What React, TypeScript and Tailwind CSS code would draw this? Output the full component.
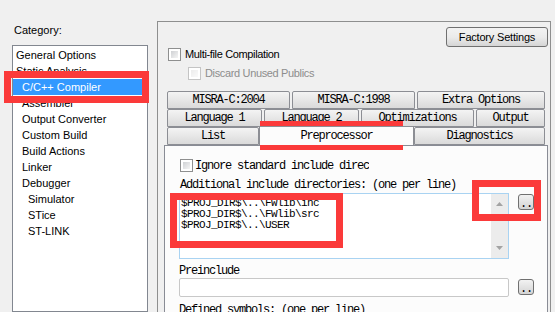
import React from 'react'

const sans = "font-['Liberation_Sans',Arial,sans-serif]"
const mono = "font-['Liberation_Mono',monospace] text-[12px] tracking-[-1.2px] text-black"
const monoSmall = "font-['Liberation_Mono',monospace] text-[11px] tracking-[-0.6px] text-black"
const redBox = 'absolute border-[7px] border-[#fb3a3a] pointer-events-none'

const categories = [
  { name: 'General Options', pad: 'pl-[3px]' },
  { name: 'Static Analysis', pad: 'pl-[3px]' },
  { name: 'C/C++ Compiler', pad: 'pl-[9px]', selected: true },
  { name: 'Assembler', pad: 'pl-[9px]' },
  { name: 'Output Converter', pad: 'pl-[9px]' },
  { name: 'Custom Build', pad: 'pl-[9px]' },
  { name: 'Build Actions', pad: 'pl-[9px]' },
  { name: 'Linker', pad: 'pl-[9px]' },
  { name: 'Debugger', pad: 'pl-[9px]' },
  { name: 'Simulator', pad: 'pl-[15px]' },
  { name: 'STice', pad: 'pl-[15px]' },
  { name: 'ST-LINK', pad: 'pl-[15px]' },
]

function Checkbox({ disabled }: { disabled?: boolean }) {
  return (
    <div
      className={
        disabled
          ? 'w-[13px] h-[13px] shrink-0 border border-[#c4c4c4] bg-white p-[2px]'
          : 'w-[13px] h-[13px] shrink-0 border border-[#8e8f8f] bg-white p-[2px]'
      }
    >
      <div
        className={
          disabled
            ? 'w-full h-full bg-linear-to-br from-[#ececec] to-[#fafafa]'
            : 'w-full h-full bg-linear-to-br from-[#cfd1d4] to-[#f5f5f5]'
        }
      />
    </div>
  )
}

function Tab({ label, className }: { label: string; className: string }) {
  return (
    <div
      className={
        'h-[18px] shrink-0 flex items-center justify-center border border-[#8c8e94] rounded-t-[2px] bg-linear-to-b from-[#f4f4f4] to-[#dadada] ' +
        mono +
        ' ' +
        className
      }
    >
      {label}
    </div>
  )
}

function DotsButton() {
  return (
    <div className="ml-[9px] mt-[1px] w-[16px] h-[16px] shrink-0 rounded-[3px] border border-[#707070] bg-linear-to-b from-[#f2f2f2] to-[#d4d4d4] flex items-end justify-center">
      <span className={mono + ' leading-[10px]'}>..</span>
    </div>
  )
}

function Arrow({ up }: { up?: boolean }) {
  return (
    <svg width="7" height="4" viewBox="0 0 7 4">
      <polygon points={up ? '0,4 7,4 3.5,0' : '0,0 7,0 3.5,4'} fill="#a3a3a3" />
    </svg>
  )
}

export default function App() {
  return (
    <div className={'relative w-[555px] h-[312px] overflow-hidden bg-[#f0f0f0] flex text-[11px] text-black ' + sans}>
      {/* category list */}
      <div className="w-[157px] shrink-0 pl-[12px] pt-[24px] flex flex-col">
        <div className="h-[13px] leading-[13px] pl-[2px]">Category:</div>
        <div className="mt-[8px] w-[136px] h-[280px] border border-[#828790] bg-white pt-[1px]">
          {categories.map((c) =>
            c.selected ? (
              <div key={c.name} className={'h-[16px] leading-[16px] mr-[3px] bg-[#3399ff] text-white ' + c.pad}>
                {c.name}
              </div>
            ) : (
              <div key={c.name} className={'h-[16px] leading-[16px] ' + c.pad}>
                {c.name}
              </div>
            )
          )}
        </div>
      </div>

      {/* options frame */}
      <div className="mt-[21px] w-[394px] h-[300px] shrink-0 border-l border-t border-r border-[#8e8f8f] flex flex-col">
        <div className="flex justify-end pt-[5px] pr-[2px]">
          <div className="w-[102px] h-[20px] rounded-[3px] border border-[#707070] bg-linear-to-b from-[#f3f3f3] via-[#ebebeb] to-[#d5d5d5] flex items-center justify-center tracking-[-0.2px]">
            Factory Settings
          </div>
        </div>

        <div className="mt-[1px] pl-[10px] flex items-center gap-[4px] h-[13px] tracking-[-0.35px]">
          <Checkbox />
          <span>Multi-file Compilation</span>
        </div>
        <div className="mt-[6px] pl-[30px] flex items-center gap-[4px] h-[13px] tracking-[-0.35px] text-[#8d8d8d]">
          <Checkbox disabled />
          <span>Discard Unused Publics</span>
        </div>

        {/* tabs */}
        <div className="mt-[11px] pl-[9px] flex flex-col">
          <div className="flex gap-[2px]">
            <Tab label="MISRA-C:2004" className="w-[123px]" />
            <Tab label="MISRA-C:1998" className="w-[123px]" />
            <Tab label="Extra Options" className="w-[128px]" />
          </div>
          <div className="flex gap-[2px]">
            <Tab label="Language 1" className="w-[95px]" />
            <Tab label="Language 2" className="w-[95px]" />
            <Tab label="Optimizations" className="w-[113px]" />
            <Tab label="Output" className="w-[69px]" />
          </div>
          <div className="flex relative z-10">
            <Tab label="List" className="w-[92px]" />
            <div className={'w-[155px] h-[19px] -mt-[1px] -mb-[1px] shrink-0 flex items-center justify-center border border-b-0 border-[#8c8e94] bg-[#fcfcfc] ' + mono}>
              Preprocessor
            </div>
            <Tab label="Diagnostics" className="w-[131px]" />
          </div>
        </div>

        {/* tab page */}
        <div className="ml-[6px] w-[384px] flex-1 border border-[#898c95] bg-[#fcfcfc] flex flex-col">
          <div className="mt-[13px] pl-[15px] flex items-center gap-[2px] h-[13px]">
            <Checkbox />
            <span className={'w-[174px] overflow-hidden whitespace-nowrap ' + mono}>Ignore standard include directories</span>
          </div>
          <div className={'mt-[7px] pl-[15px] leading-[12px] whitespace-nowrap ' + mono}>
            Additional include directories: (one per line)
          </div>
          <div className="mt-[2px] pl-[14px] flex items-start">
            <div className="w-[330px] h-[66px] border border-[#a9d3f2] bg-white flex">
              <div className={'flex-1 pl-[1px] pt-[4px] leading-[11px] ' + monoSmall}>
                <div>$PROJ_DIR$\..\FWlib\inc</div>
                <div>$PROJ_DIR$\..\FWlib\src</div>
                <div>$PROJ_DIR$\..\USER</div>
              </div>
              <div className="w-[17px] bg-[#ececec] flex flex-col items-center justify-between pt-[8px] pb-[8px]">
                <Arrow up />
                <Arrow />
              </div>
            </div>
            <DotsButton />
          </div>
          <div className={'mt-[6px] pl-[14px] leading-[12px] ' + mono}>Preinclude</div>
          <div className="mt-[1px] pl-[14px] flex items-start">
            <div className="w-[330px] h-[19px] rounded-[2px] border border-[#c8c8c8] bg-white" />
            <DotsButton />
          </div>
          <div className={'mt-[7px] pl-[14px] leading-[12px] ' + mono}>Defined symbols: (one per line)</div>
        </div>
      </div>

      {/* annotations */}
      <div className={redBox + ' left-[4px] top-[71px] w-[145px] h-[32px]'} />
      <div className={redBox + ' left-[260px] top-[121px] w-[143px] h-[29px]'} />
      <div className={redBox + ' left-[170px] top-[193px] w-[173px] h-[55px]'} />
      <div className={redBox + ' left-[472px] top-[180px] w-[69px] h-[41px]'} />
    </div>
  )
}
